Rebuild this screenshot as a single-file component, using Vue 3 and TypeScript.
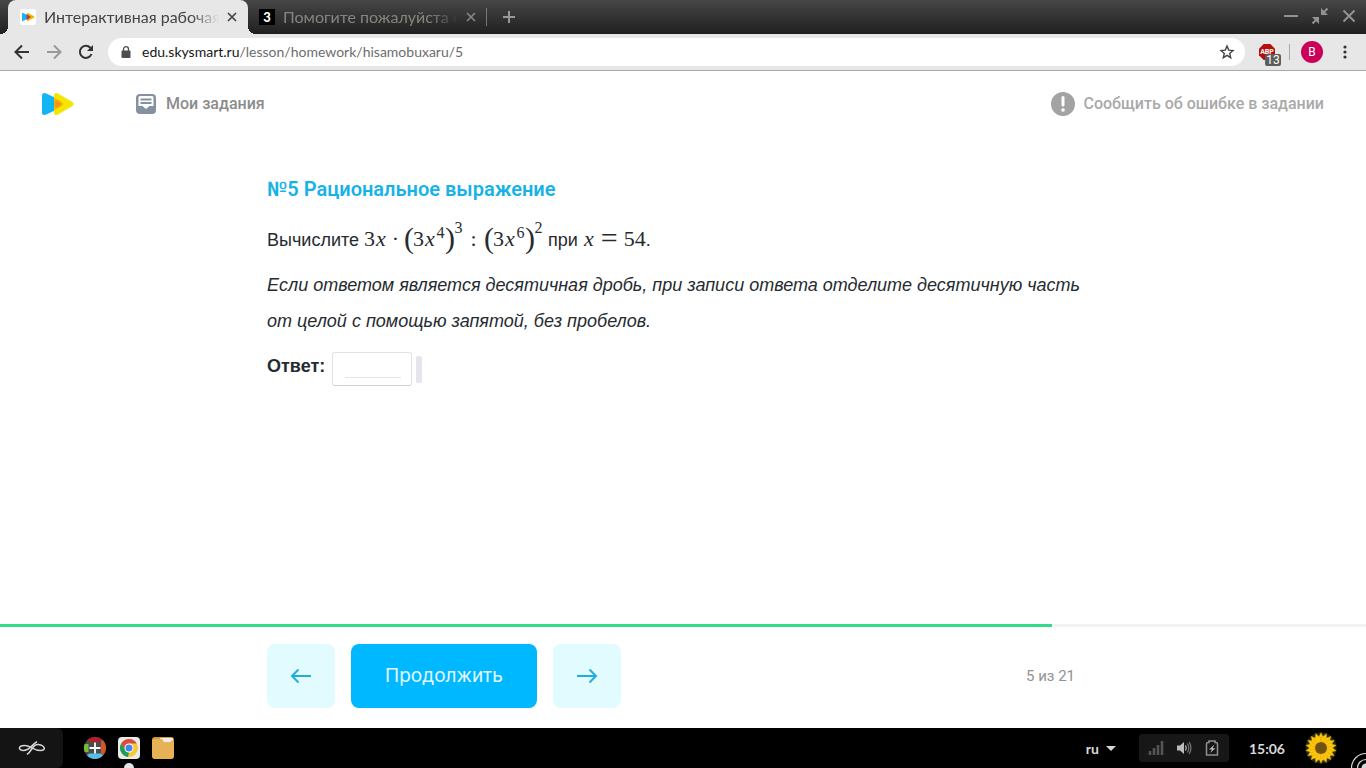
<script setup lang="ts">
import { ref } from 'vue'

interface Token {
  kind: string
  text: string
}

const answer = ref('')
const current = 5
const total = 21
const progress = 77

const expression: Token[] = [
  { kind: 'num', text: '3' },
  { kind: 'var', text: 'x' },
  { kind: 'dot', text: '·' },
  { kind: 'paren', text: '(' },
  { kind: 'num', text: '3' },
  { kind: 'var', text: 'x' },
  { kind: 'power', text: '4' },
  { kind: 'paren', text: ')' },
  { kind: 'power outer', text: '3' },
  { kind: 'colon', text: ':' },
  { kind: 'paren', text: '(' },
  { kind: 'num', text: '3' },
  { kind: 'var', text: 'x' },
  { kind: 'power', text: '6' },
  { kind: 'paren', text: ')' },
  { kind: 'power outer', text: '2' },
]

const condition: Token[] = [
  { kind: 'var', text: 'x' },
  { kind: 'equals', text: '=' },
  { kind: 'num', text: '54' },
]

const petals = Array.from({ length: 18 }, (_, i) => i * 20)
</script>

<template>
  <div class="desktop">
    <div class="tabstrip">
      <div class="tab active">
        <svg class="favicon" viewBox="0 0 16 16" aria-hidden="true">
          <rect width="16" height="16" rx="2" fill="#fff" />
          <path d="M2 4.500Q2 3.400 3 3.900L8 6.500V9.500L3 12.100Q2 12.600 2 11.500Z" fill="#18b4f5" />
          <path d="M7 4.500Q7 3.400 8 3.900L14 7.300Q15 8 14 8.700L8 12.100Q7 12.600 7 11.500Z" fill="#f0b800" />
          <path d="M6.500 5L11 8L6.500 11Z" fill="#b03a58" />
        </svg>
        <span class="tab-title">Интерактивная рабочая</span>
        <button class="tab-close" aria-label="Закрыть вкладку">
          <svg viewBox="0 0 10 10"><path d="M1 1L9 9M9 1L1 9" /></svg>
        </button>
      </div>
      <div class="tab">
        <span class="znania">3</span>
        <span class="tab-title">Помогите пожалуйста с</span>
        <button class="tab-close" aria-label="Закрыть вкладку">
          <svg viewBox="0 0 10 10"><path d="M1 1L9 9M9 1L1 9" /></svg>
        </button>
      </div>
      <button class="new-tab" aria-label="Новая вкладка">
        <svg viewBox="0 0 14 14"><path d="M7 1V13M1 7H13" /></svg>
      </button>
      <div class="window-controls">
        <button aria-label="Свернуть"><svg viewBox="0 0 16 16"><path d="M1 8H15" stroke-width="2" /></svg></button>
        <button aria-label="Восстановить">
          <svg viewBox="0 0 16 16">
            <path d="M15.500 .5L11 5M.5 15.500L5 11" stroke-width="2" />
            <path d="M9 0V7H16ZM0 9H7V16Z" fill="#929292" stroke="none" />
          </svg>
        </button>
        <button aria-label="Закрыть"><svg viewBox="0 0 16 16"><path d="M2.500 2.500L13.500 13.500M13.500 2.500L2.500 13.500" stroke-width="2" /></svg></button>
      </div>
    </div>

    <div class="toolbar">
      <button class="nav" aria-label="Назад"><svg viewBox="0 0 16 16"><path d="M15 8H2M8 1.500L1.500 8L8 14.500" /></svg></button>
      <button class="nav off" aria-label="Вперёд"><svg viewBox="0 0 16 16"><path d="M1 8H14M8 1.500L14.500 8L8 14.500" /></svg></button>
      <button class="nav" aria-label="Обновить">
        <svg viewBox="0 0 16 16"><path d="M13.500 10A6 6 0 1 1 12.300 3.800L13 4.500" /><path d="M15 1V7H9Z" fill="#333" stroke="none" /></svg>
      </button>
      <div class="omnibox">
        <svg class="lock" viewBox="0 0 10 12"><rect x="0.500" y="4.500" width="9" height="7.500" rx="1" fill="#4c4f52" /><path d="M2.500 5V3.200a2.500 2.500 0 0 1 5 0V5" fill="none" stroke="#4c4f52" stroke-width="1.300" /></svg>
        <span class="url"><span class="host">edu.skysmart.ru</span>/lesson/homework/hisamobuxaru/5</span>
        <button class="star" aria-label="Добавить в закладки">
          <svg viewBox="0 0 16 16"><path d="M8 2L9.700 6.100L14 6.500L10.700 9.400L11.700 13.700L8 11.400L4.300 13.700L5.300 9.400L2 6.500L6.300 6.100Z" fill="none" stroke="#444" stroke-width="1.400" /></svg>
        </button>
      </div>
      <button class="abp" aria-label="ABP">
        <svg viewBox="0 0 16 16"><path d="M4.700 0H11.300L16 4.700V11.300L11.300 16H4.700L0 11.300V4.700Z" fill="#b80d0d" /></svg>
        <span class="abp-name">ABP</span>
        <span class="abp-count">13</span>
      </button>
      <span class="divider"></span>
      <button class="avatar">B</button>
      <button class="menu" aria-label="Меню"><svg viewBox="0 0 4 14"><circle cx="2" cy="2" r="1.600" /><circle cx="2" cy="7" r="1.600" /><circle cx="2" cy="12" r="1.600" /></svg></button>
    </div>

    <div class="page">
      <header class="site-header">
        <a class="logo" href="#" aria-label="Skysmart">
          <svg viewBox="0 0 32 24">
            <defs>
              <radialGradient id="overlap" cx="0.350" cy="0.500" r="0.700">
                <stop offset="0" stop-color="#f08a10" />
                <stop offset="0.500" stop-color="#f4ae0c" />
                <stop offset="1" stop-color="#f6e500" />
              </radialGradient>
            </defs>
            <path d="M0 3.500Q0 0 3.500 1.200L14 6V18L3.500 22.800Q0 24 0 20.500Z" fill="#12b5f4" />
            <path d="M12 3.500Q12 0 15.500 1.200L30.500 10Q33 12 30.500 14L15.500 22.800Q12 24 12 20.500Z" fill="#f6e500" />
            <path d="M12 5.500L22.500 12L12 18.500Z" fill="url(#overlap)" />
          </svg>
        </a>
        <a class="tasks" href="#">
          <svg viewBox="0 0 20 20">
            <rect width="20" height="20" rx="4" fill="#8391a1" />
            <path d="M2.500 3.500Q2.500 2 4 2H16Q17.500 2 17.500 3.500V12H13.500L10 15L6.500 12H2.500Z" fill="#fff" />
            <path d="M4.500 5.500H15.500M4.500 9H15.500" stroke="#8391a1" stroke-width="1.800" />
          </svg>
          <span>Мои задания</span>
        </a>
        <a class="report" href="#">
          <svg viewBox="0 0 24 24"><circle cx="12" cy="12" r="12" fill="#a3a3a3" /><path d="M12 5.500V13" stroke="#fff" stroke-width="3" stroke-linecap="round" /><circle cx="12" cy="18" r="1.800" fill="#fff" /></svg>
          <span>Сообщить об ошибке в задании</span>
        </a>
      </header>

      <main class="content">
        <h1>№5 Рациональное выражение</h1>
        <p>Вычислите <span class="math"><span v-for="(t, i) in expression" :key="i" :class="t.kind">{{ t.text }}</span></span> при <span class="math"><span v-for="(t, i) in condition" :key="i" :class="t.kind">{{ t.text }}</span></span>.</p>
        <p class="hint">Если ответом является десятичная дробь, при записи ответа отделите десятичную часть от целой с помощью запятой, без пробелов.</p>
        <div class="answer">
          <label for="answer">Ответ:</label>
          <span class="answer-box"><input id="answer" v-model="answer" type="text" autocomplete="off" /></span>
          <span class="answer-mark"></span>
        </div>
      </main>

      <footer>
        <div class="progress"><div class="progress-fill" :style="{ width: progress + '%' }"></div></div>
        <div class="actions">
          <button class="step" aria-label="Предыдущее"><svg viewBox="0 0 22 16"><path d="M21 8H2M8.500 1.500L2 8L8.500 14.500" /></svg></button>
          <button class="next">Продолжить</button>
          <button class="step" aria-label="Следующее"><svg viewBox="0 0 22 16"><path d="M1 8H20M13.500 1.500L20 8L13.500 14.500" /></svg></button>
          <span class="counter">{{ current }} из {{ total }}</span>
        </div>
      </footer>
    </div>

    <div class="taskbar">
      <button class="launcher" aria-label="Меню приложений">
        <svg viewBox="0 0 28 14"><path d="M9.500 13C13 11.500 14.500 2.500 20.500 3.500C27 4.500 28.500 9.500 22.500 9.500C15 9.500 13 4.500 6.500 4.500C0 4.500 0 9.500 5.500 9.500C12 9.500 14 3.500 18.500 1" fill="none" stroke="#d2d2d2" stroke-width="1.600" stroke-linecap="round" /></svg>
      </button>
      <div class="apps">
        <button class="app" aria-label="Приложения">
          <svg viewBox="0 0 22 22">
            <circle cx="11" cy="11" r="11" fill="#4a4d50" />
            <path d="M3.200 3.200A11 11 0 0 1 18 2.500L15 5H5Z" fill="#b81c24" />
            <path d="M18 2.500A11 11 0 0 1 19 18.500L17 16V5Z" fill="#db5524" />
            <path d="M19 18.500A11 11 0 0 1 3 18.500L5 16.500H17Z" fill="#55bfe8" />
            <path d="M.7 15A11 11 0 0 1 .7 7H4.500V15Z" fill="#76bd32" />
            <path d="M11 5.500V16.500M5.500 11H16.500" stroke="#fff" stroke-width="1.800" />
          </svg>
        </button>
        <button class="app running" aria-label="Chrome">
          <svg viewBox="0 0 22 22">
            <rect width="22" height="22" rx="4" fill="#ebebeb" />
            <circle cx="11" cy="11" r="9" fill="#f5c933" />
            <path d="M3.200 6.500A9 9 0 0 1 18.800 6.500H11L7.500 13.500Z" fill="#dc4b3e" />
            <path d="M3.200 6.500L7.500 13.300L11 15.500L10 20A9 9 0 0 1 3.200 6.500Z" fill="#219c58" />
            <circle cx="11" cy="11" r="4.500" fill="#fff" /><circle cx="11" cy="11" r="3.500" fill="#4484ed" />
          </svg>
        </button>
        <button class="app" aria-label="Файлы">
          <svg viewBox="0 0 22 22">
            <rect width="22" height="22" rx="3" fill="#d09a3c" />
            <path d="M8 1H21V8H12Z" fill="#f4eee0" />
            <path d="M0 4Q0 2 3 2H10L12 5H19V3L22 5V18Q22 22 18 22H4Q0 22 0 18Z" fill="#e6b255" />
          </svg>
        </button>
      </div>
      <div class="status">
        <button class="lang">ru<svg viewBox="0 0 10 5"><path d="M0 0H10L5 5Z" fill="#d8d8d8" /></svg></button>
        <div class="tray">
          <svg viewBox="0 0 16 16"><path d="M2 15V11M6 15V8M10 15V5M14 15V1" stroke="#555" stroke-width="2.600" /></svg>
          <svg viewBox="0 0 16 16"><path d="M1 5.500H4L8 2V14L4 10.500H1Z" fill="#bcbcbc" /><path d="M9.500 5.500Q11 8 9.500 10.500" fill="none" stroke="#bcbcbc" stroke-width="1.300" /><path d="M11.500 3.500Q14 8 11.500 12.500M13.300 2Q16.500 8 13.300 14" fill="none" stroke="#777" stroke-width="1.200" /></svg>
          <svg viewBox="0 0 16 16"><path d="M5 2.500V1H11V2.500H12Q13.500 2.500 13.500 4V15H2.500V4Q2.500 2.500 4 2.500Z" fill="none" stroke="#909090" stroke-width="1.500" /><path d="M10.500 4.500L5 9.500H8L6 13L11.500 8.300H8.500Z" fill="#bdbdbd" /></svg>
        </div>
        <span class="clock">15:06</span>
        <button class="user" aria-label="Пользователь">
          <svg viewBox="0 0 32 32">
            <circle cx="16" cy="16" r="15.500" fill="#202a18" />
            <path v-for="a in petals" :key="a" d="M16 16L12.700 6Q15 3.500 16 .5Q17 3.500 19.300 6Z" fill="#fbc80c" stroke="#d79400" stroke-width=".4" :transform="`rotate(${a} 16 16)`" />
            <circle cx="16" cy="16" r="6" fill="#76500f" /><circle cx="16" cy="16" r="3" fill="#625719" />
          </svg>
        </button>
      </div>
      <svg class="corner" viewBox="0 0 16 16" aria-hidden="true"><g fill="none" stroke="#d8d8d8" stroke-width="1.200"><circle cx="16" cy="16" r="14.500" /><circle cx="16" cy="16" r="8.500" /></g><circle cx="16" cy="16" r="4.500" fill="#d8d8d8" /></svg>
    </div>
  </div>
</template>

<style>
body {
  margin: 0;
}
</style>

<style scoped>
* {
  box-sizing: border-box;
}
button {
  border: 0;
  padding: 0;
  background: none;
  font: inherit;
  color: inherit;
  cursor: pointer;
}
svg {
  display: block;
  flex: none;
}
a {
  text-decoration: none;
}
.desktop {
  display: flex;
  flex-direction: column;
  min-height: 100vh;
  background: #fff;
  font-family: Lato, "Noto Sans", sans-serif;
}
.tabstrip {
  display: flex;
  height: 34px;
  padding-left: 8px;
  background: linear-gradient(#464646, #202020);
}
.tab {
  display: flex;
  align-items: center;
  width: 238px;
  padding: 0 10px 0 11px;
  font-size: 16px;
  color: #85857f;
}
.tab.active {
  position: relative;
  width: 240px;
  padding: 0 11px 0 12px;
  border-radius: 8px 8px 0 0;
  background: #e7e7e7;
  color: #414548;
}
.tab.active::before,
.tab.active::after {
  content: "";
  position: absolute;
  bottom: 0;
  width: 8px;
  height: 8px;
}
.tab.active::before {
  left: -8px;
  background: radial-gradient(circle at 0 0, transparent 8px, #e7e7e7 8px);
}
.tab.active::after {
  right: -8px;
  background: radial-gradient(circle at 100% 0, transparent 8px, #e7e7e7 8px);
}
.favicon,
.znania {
  width: 16px;
  height: 16px;
  margin-right: 8px;
}
.znania {
  flex: none;
  background: #000;
  color: #fff;
  font-weight: 900;
  font-size: 13px;
  line-height: 16px;
  text-align: center;
}
.tab-title {
  flex: 1;
  min-width: 0;
  overflow: hidden;
  white-space: nowrap;
  line-height: 24px;
  mask-image: linear-gradient(90deg, #000 84%, transparent);
}
.tab-close {
  margin-left: 8px;
}
.tab-close svg {
  width: 10px;
  height: 10px;
  stroke: currentColor;
  stroke-width: 1.7;
}
.new-tab {
  display: flex;
  align-items: center;
  align-self: center;
  height: 18px;
  padding-left: 15px;
  border-left: 1px solid #777;
}
.new-tab svg {
  width: 14px;
  height: 14px;
  stroke: #999;
  stroke-width: 2;
}
.window-controls {
  display: flex;
  align-items: center;
  gap: 13px;
  margin-left: auto;
  padding: 0 9px 2px 0;
}
.window-controls svg {
  width: 16px;
  height: 16px;
  stroke: #929292;
}
.toolbar {
  display: flex;
  align-items: center;
  height: 37px;
  padding: 0 19px 0 14px;
  border-bottom: 1px solid #aaa;
  background: #e7e7e7;
}
.nav {
  margin-right: 16px;
}
.nav svg {
  width: 16px;
  height: 16px;
  fill: none;
  stroke: #333;
  stroke-width: 2;
}
.nav.off svg {
  stroke: #999;
}
.omnibox {
  display: flex;
  flex: 1;
  align-items: center;
  height: 28px;
  margin-left: -2px;
  padding: 0 10px 0 13px;
  border-radius: 14px;
  background: #fff;
}
.lock {
  width: 10px;
  height: 12px;
  margin-right: 11px;
}
.url {
  flex: 1;
  font-size: 14px;
  line-height: 20px;
  color: #6d6d6d;
}
.host {
  color: #161616;
}
.star svg {
  width: 16px;
  height: 16px;
}
.abp {
  position: relative;
  margin-left: 14px;
}
.abp svg {
  width: 16px;
  height: 16px;
}
.abp-name {
  position: absolute;
  top: 4px;
  left: 0;
  width: 16px;
  font: 700 7px/8px Roboto, sans-serif;
  color: #fff;
}
.abp-count {
  position: absolute;
  top: 10px;
  left: 6px;
  width: 16px;
  border-radius: 2px;
  background: #5d5d5d;
  color: #fff;
  font: 12px/12px Roboto, sans-serif;
}
.divider {
  width: 1px;
  height: 16px;
  margin: 0 11px 0 14px;
  background: #aaa;
}
.avatar {
  width: 22px;
  height: 22px;
  border-radius: 50%;
  background: #cb0058;
  color: #fff;
  font: 12px/22px Roboto, sans-serif;
}
.menu {
  margin-left: 20px;
}
.menu svg {
  width: 4px;
  height: 14px;
  fill: #333;
}
.page {
  display: flex;
  flex: 1;
  flex-direction: column;
  color: #262b30;
  font-family: "Liberation Sans", Arial, sans-serif;
}
.site-header {
  display: flex;
  align-items: center;
  height: 66px;
  padding: 0 42px;
  font: 500 16px/24px Roboto, sans-serif;
}
.logo svg {
  width: 32px;
  height: 24px;
}
.tasks,
.report {
  display: flex;
  align-items: center;
}
.tasks {
  gap: 10px;
  margin-left: 62px;
  color: #8c8c8c;
}
.tasks svg {
  width: 20px;
  height: 20px;
}
.report {
  gap: 8px;
  margin-left: auto;
  color: #a9a9a9;
}
.report svg {
  width: 24px;
  height: 24px;
}
.content,
.actions {
  width: 100%;
  max-width: 832px;
  margin: 0 auto;
}
.content {
  flex: 1;
  padding-top: 38px;
  font-size: 18px;
  line-height: 36px;
}
h1 {
  margin: 0 0 19px;
  color: #17b3e8;
  font: 600 20px/28px Roboto, sans-serif;
}
p {
  margin: 0 0 9px;
}
.hint {
  font-style: italic;
}
.math {
  font-family: "Liberation Serif", serif;
  font-size: 22px;
  line-height: 1px;
  white-space: nowrap;
}
.math span {
  display: inline-block;
  text-align: center;
}
.math .var {
  width: 12px;
  font-style: italic;
}
.math .dot {
  width: 17px;
}
.math .paren {
  width: 9px;
  font-size: 30px;
  vertical-align: -2px;
}
.math .power {
  width: 9px;
  font-size: 16px;
  vertical-align: 8px;
}
.math .outer {
  vertical-align: 13px;
}
.math .colon {
  width: 21px;
}
.math .equals {
  width: 29px;
  font-size: 30px;
  vertical-align: -2px;
}
.answer {
  display: flex;
  align-items: flex-start;
}
.answer label {
  font-weight: 700;
}
.answer-box {
  display: flex;
  width: 80px;
  height: 34px;
  margin: 4px 4px 0 7px;
  padding: 4px 10px 7px 12px;
  border: 1px solid #e2e2e2;
  border-bottom-color: #cfcfcf;
  border-radius: 3px;
}
.answer-box input {
  width: 100%;
  padding: 0;
  border: 0;
  border-bottom: 1px solid #e4e4ea;
  outline: 0;
  background: none;
  font: inherit;
}
.answer-mark {
  width: 6px;
  height: 27px;
  margin-top: 8px;
  border-radius: 2px;
  background: #e5e5ee;
}
.progress {
  height: 3px;
  background: #f2f2f2;
}
.progress-fill {
  height: 3px;
  background: #32dc8c;
}
.actions {
  display: flex;
  align-items: center;
  gap: 16px;
  padding: 17px 24px 20px 0;
}
.step,
.next {
  height: 64px;
  border-radius: 8px;
}
.step {
  display: flex;
  align-items: center;
  justify-content: center;
  width: 68px;
  background: #e1fbff;
}
.step svg {
  width: 22px;
  height: 16px;
  fill: none;
  stroke: #22aedb;
  stroke-width: 2;
}
.next {
  width: 186px;
  background: #00b8ff;
  color: #e3f8ff;
  font: 19px/28px Inter, sans-serif;
}
.counter {
  margin-left: auto;
  color: #929292;
  font: 15px/24px Roboto, sans-serif;
}
.taskbar {
  position: relative;
  display: flex;
  align-items: center;
  height: 40px;
  background: #000;
  color: #dadada;
}
.launcher {
  display: flex;
  align-items: center;
  justify-content: center;
  width: 63px;
  height: 40px;
  border-radius: 0 6px 6px 0;
  background: #141414;
}
.launcher svg {
  width: 28px;
  height: 14px;
}
.apps {
  display: flex;
  gap: 12px;
  margin-left: 21px;
}
.app {
  position: relative;
}
.app svg {
  width: 22px;
  height: 22px;
}
.running::after {
  content: "";
  position: absolute;
  bottom: -9px;
  left: 6px;
  width: 10px;
  height: 5px;
  border-radius: 5px 5px 0 0;
  background: #e4e4e4;
}
.status {
  display: flex;
  align-items: center;
  margin-left: auto;
  padding-right: 29px;
  font-size: 14px;
  font-weight: 700;
}
.lang {
  display: flex;
  align-items: center;
  gap: 7px;
}
.lang svg {
  width: 10px;
  height: 5px;
}
.tray {
  display: flex;
  align-items: center;
  justify-content: center;
  gap: 12px;
  width: 90px;
  height: 28px;
  margin: 0 20px 0 23px;
  border-radius: 3px;
  background: #171717;
}
.tray svg {
  width: 16px;
  height: 16px;
}
.user {
  margin-left: 20px;
}
.user svg {
  width: 32px;
  height: 32px;
}
.corner {
  position: absolute;
  right: 0;
  bottom: 0;
  width: 16px;
  height: 16px;
}
</style>
